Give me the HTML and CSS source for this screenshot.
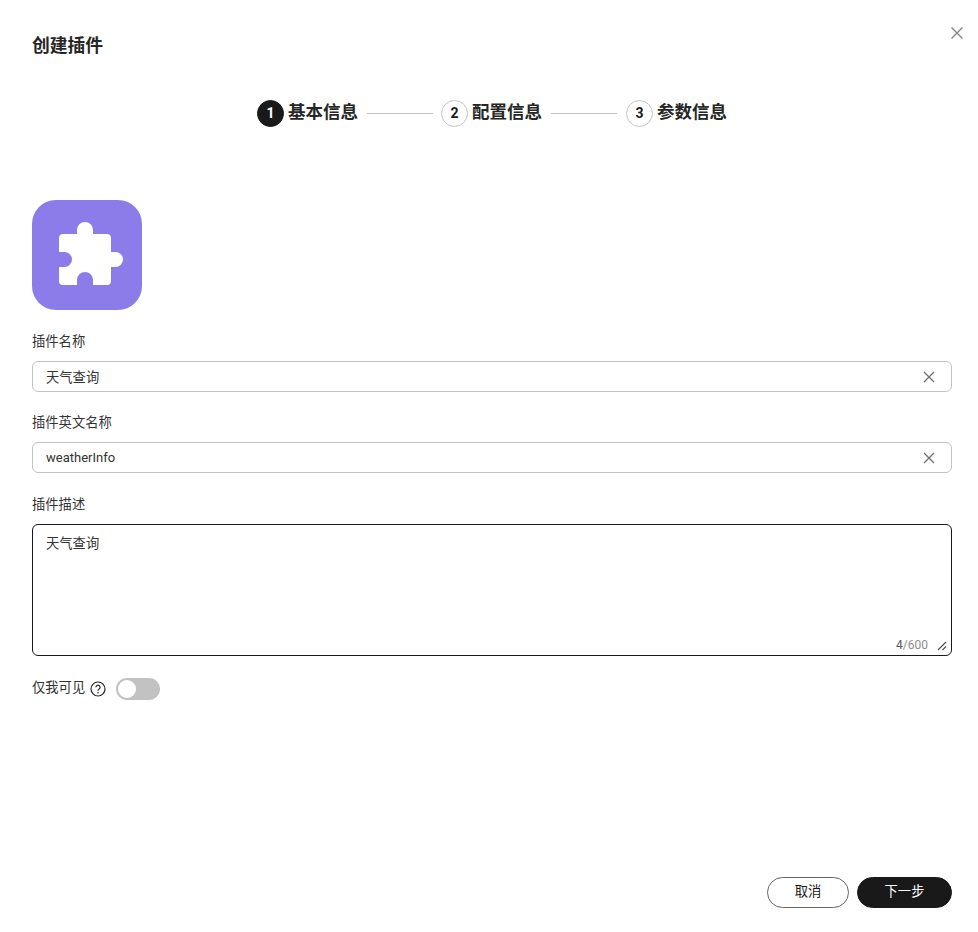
FILE: index.html
```html
<!DOCTYPE html>
<html lang="zh-CN">
<head>
  <meta charset="UTF-8" />
  <title>创建插件</title>
  <link rel="stylesheet" href="styles.css">
</head>
<body>
  <div class="dialog">
    <button class="close" aria-label="关闭">
      <svg width="14" height="14" viewBox="0 0 14 14"><path d="M1.500 1.500l11 11M12.500 1.500l-11 11" /></svg>
    </button>

    <h2 class="title">创建插件</h2>

    <div class="steps">
      <span class="step-num active">1</span>
      <span class="step-name">基本信息</span>
      <span class="step-line"></span>
      <span class="step-num">2</span>
      <span class="step-name">配置信息</span>
      <span class="step-line last"></span>
      <span class="step-num">3</span>
      <span class="step-name">参数信息</span>
    </div>

    <div class="logo">
      <svg width="110" height="110" viewBox="0 0 110 110">
        <path d="M27 38a4 4 0 0 1 4-4h14v-4a8 8 0 0 1 16 0v4h14a4 4 0 0 1 4 4v14h4.500a7.500 7.500 0 0 1 0 15H79v14a4 4 0 0 1-4 4H61v-5a8 8 0 0 0-16 0v5H31a4 4 0 0 1-4-4V67h5.500a7.500 7.500 0 0 0 0-15H27z" fill="#fff"/>
      </svg>
    </div>

    <label class="field-label">插件名称</label>
    <div class="input-box">
      <input type="text" value="天气查询" />
      <svg class="clear" width="12" height="12" viewBox="0 0 12 12"><path d="M1 1l10 10M11 1L1 11" /></svg>
    </div>

    <label class="field-label">插件英文名称</label>
    <div class="input-box">
      <input class="latin" type="text" value="weatherInfo" />
      <svg class="clear" width="12" height="12" viewBox="0 0 12 12"><path d="M1 1l10 10M11 1L1 11" /></svg>
    </div>

    <label class="field-label">插件描述</label>
    <div class="area-box">
      <textarea>天气查询</textarea>
      <span class="count"><b>4</b>/600</span>
      <svg class="grip" width="10" height="10" viewBox="0 0 10 10"><path d="M1 9l8-8M5.500 9l3.500-3.500" /></svg>
    </div>

    <div class="private-row">
      <span class="private-text">仅我可见</span>
      <svg class="help" width="16" height="16" viewBox="0 0 16 16">
        <circle cx="8" cy="8" r="7" />
        <path d="M5.900 6.300a2.100 2.100 0 1 1 3.200 1.800c-.7.400-1.100.8-1.100 1.600" />
        <circle class="dot" cx="8" cy="11.700" r=".8" />
      </svg>
      <span class="toggle"><span class="knob"></span></span>
    </div>

    <div class="footer">
      <button class="btn">取消</button>
      <button class="btn primary">下一步</button>
    </div>
  </div>
</body>
</html>
```

FILE: styles.css
```css
* {
  box-sizing: border-box;
}

html, body {
  margin: 0;
  height: 100%;
}

body {
  font-family: "Roboto", "Noto Sans CJK SC", sans-serif;
  background: #fff;
  color: #191919;
  font-size: 13.3px;
}

.dialog {
  position: relative;
  height: 932px;
  padding: 35px 26px 24px 32px;
  display: flex;
  flex-direction: column;
  overflow: hidden;
}

.close {
  position: absolute;
  top: 26px;
  right: 14px;
  width: 14px;
  height: 14px;
  padding: 0;
  border: none;
  background: none;
  display: flex;
}

.close path {
  stroke: #808080;
  stroke-width: 1.3;
  fill: none;
}

.title {
  margin: 0;
  font-size: 17.8px;
  line-height: 22px;
  font-weight: 700;
  color: #262626;
}

.steps {
  margin-top: 42px;
  display: flex;
  align-items: center;
  justify-content: center;
  height: 28px;
}

.step-num {
  width: 27px;
  height: 27px;
  border-radius: 50%;
  border: 1px solid #c4c4c4;
  display: flex;
  align-items: center;
  justify-content: center;
  font-size: 14px;
  font-weight: 700;
  margin-right: 4px;
}

.step-num.active {
  background: #191919;
  border-color: #191919;
  color: #fff;
}

.step-name {
  font-size: 17.5px;
  font-weight: 700;
  line-height: 24px;
  padding-bottom: 2px;
  color: #262626;
}

.step-line {
  width: 66px;
  height: 1px;
  background: #c4c4c4;
  margin: 0 8px 0 9px;
}

.step-line.last {
  margin-right: 9px;
}

.logo {
  margin-top: 73px;
  margin-bottom: .5px;
  width: 110px;
  height: 110px;
  border-radius: 24px;
  background: #8b7ce9;
  flex: none;
}

.logo svg {
  display: block;
}

.field-label {
  display: block;
  margin-top: 22.6px;
  line-height: 18px;
  color: #333;
}

.input-box {
  margin-top: 9.8px;
  height: 31px;
  border: 1px solid #c2c2c2;
  border-radius: 6px;
  display: flex;
  align-items: center;
  padding: 0 16px 0 13px;
  flex: none;
}

.input-box input {
  flex: 1;
  min-width: 0;
  border: none;
  outline: none;
  padding: 0;
  font-family: inherit;
  font-size: 13.3px;
  color: #333;
  background: none;
}

.input-box input.latin {
  font-size: 13px;
}

.clear {
  margin-top: 1px;
}

.clear path {
  stroke: #6e6e6e;
  stroke-width: 1.3;
  fill: none;
}

.area-box {
  position: relative;
  margin-top: 9.8px;
  height: 132px;
  border: 1px solid #191919;
  border-radius: 6px;
  flex: none;
}

.area-box textarea {
  display: block;
  width: 100%;
  height: 100%;
  border: none;
  outline: none;
  resize: none;
  background: none;
  padding: 10px 13px;
  font: inherit;
  line-height: 18px;
  color: #333;
}

.count {
  position: absolute;
  right: 23px;
  bottom: 2px;
  font-size: 12px;
  line-height: 16px;
  color: #8c8c8c;
}

.count b {
  font-weight: 400;
  color: #555;
}

.grip {
  position: absolute;
  right: 4px;
  bottom: 4px;
}

.grip path {
  stroke: #4d4d4d;
  stroke-width: 1.1;
  fill: none;
}

.private-row {
  margin-top: 22px;
  display: flex;
  align-items: center;
  height: 22px;
  color: #333;
}

.private-text {
  padding-bottom: 4px;
}

.help {
  margin-left: 5px;
}

.help circle, .help path {
  stroke: #262626;
  stroke-width: 1.2;
  fill: none;
}

.help .dot {
  fill: #262626;
  stroke: none;
}

.toggle {
  margin-left: 10px;
  width: 44px;
  height: 22px;
  border-radius: 11px;
  background: #c2c2c2;
  padding: 2px;
  display: flex;
}

.knob {
  width: 18px;
  height: 18px;
  border-radius: 50%;
  background: #fff;
}

.footer {
  margin-top: auto;
  display: flex;
  justify-content: flex-end;
  gap: 8px;
}

.btn {
  width: 82px;
  height: 31px;
  border: 1px solid #666;
  border-radius: 16px;
  background: #fff;
  font: inherit;
  color: #191919;
  padding: 0 0 4px;
}

.btn.primary {
  width: 95px;
  background: #191919;
  border-color: #191919;
  color: #fff;
}
```
